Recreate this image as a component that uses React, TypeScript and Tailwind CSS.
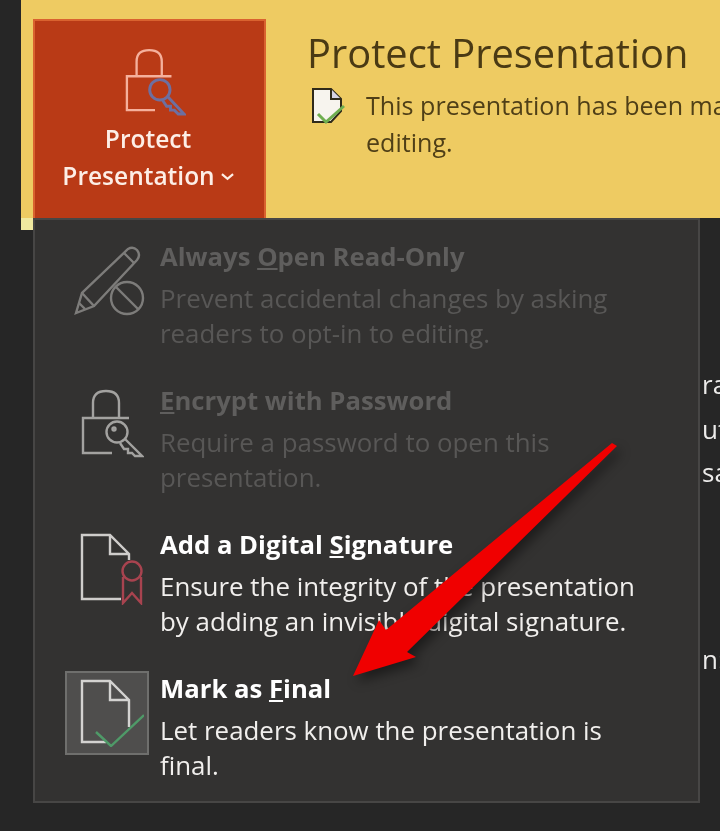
import React from 'react';

const font = { fontFamily: '"Open Sans", "Noto Sans", sans-serif' };

const PencilIcon = () => (
    <svg viewBox="0 0 72 72" className="w-[72px] h-[72px] ml-[6px]" fill="none" stroke="#7d7c7a" strokeWidth="2.4">
        <path d="M2 68 L8 48 L54 4 Q59 1 63 5 Q67 10 63 15 L20 61 Z" />
        <path d="M8 48 L20 61 M5 58 L11 64 M50 8 L60 18" />
        <circle cx="53" cy="53" r="16" />
        <path d="M42 42 L64 64" />
    </svg>
);

const LockIcon = ({ color, keyColor }: { color: string; keyColor: string }) => (
    <svg viewBox="0 0 64 72" className="w-[64px] h-[72px] ml-[9px]" fill="none" stroke={color} strokeWidth="2.4">
        <path d="M13 29 V14 Q13 2 26 2 Q39 2 39 14 V29" />
        <path d="M49 29 H3 V64 H32" />
        <g stroke={keyColor}>
            <circle cx="37" cy="43" r="10.5" />
            <circle cx="34" cy="40" r="1.5" />
            <path d="M45 50 L62 67 H55 L52 64 H48 L48 60 H44 L40 54" />
        </g>
    </svg>
);

const SignatureIcon = () => (
    <svg viewBox="0 0 64 72" className="w-[64px] h-[72px] ml-[9px]" fill="none" strokeWidth="2.4">
        <path d="M41 66 H2 V2 H30 L49 21 V27 M30 2 V21 H49" stroke="#cfcdcb" />
        <g stroke="#a8434f">
            <circle cx="52" cy="38" r="9.5" />
            <path d="M43 44 V70 L52 60 L61 70 V44" />
        </g>
    </svg>
);

const FinalIcon = () => (
    <svg viewBox="0 0 64 68" className="w-[64px] h-[68px] ml-[9px]" fill="none" strokeWidth="2.4">
        <path d="M26 63 H2 V2 H30 L49 21 V48 M30 2 V21 H49" stroke="#d4d3d1" />
        <path d="M16 53 L31 67 L64 36" stroke="#4f9a68" />
    </svg>
);

const MenuItem = ({ icon, title, lines, muted, active }: { icon: React.ReactNode; title: React.ReactNode; lines: string[]; muted?: boolean; active?: boolean }) => (
    <div className="flex h-[144px]">
        <div className={`w-[84px] h-[84px] shrink-0 flex items-center justify-center ${active ? 'bg-[#4f4e4d] border-2 border-[#6f6f6d]' : ''}`}>
            {icon}
        </div>
        <div className={`ml-[11px] ${muted ? 'text-[#585756]' : 'text-[#f1efed]'}`}>
            <div className={`text-[25.7px] leading-[35px] font-bold ${muted ? 'text-[#5f5e5d]' : 'text-white'}`}>{title}</div>
            <div className="mt-[7px] text-[25.9px] leading-[35px]">
                {lines.map((line) => (
                    <div key={line} className="whitespace-nowrap">{line}</div>
                ))}
            </div>
        </div>
    </div>
);

export default function App() {
    return (
        <div className="relative w-[720px] h-[831px] overflow-hidden bg-[#262626] blur-[0.5px]" style={font}>
            {/* Yellow info band */}
            <div className="ml-[21px] h-[218px] bg-[#eecb62] flex pl-[12px] pt-[19px]">
                <div className="w-[233px] h-[199px] shrink-0 bg-[#b93a16] border-t-2 border-x-2 border-[#d9622f] flex flex-col items-center text-[#fdeee6]">
                    <div className="mt-[27px] h-[70px] ml-[10px]">
                        <svg viewBox="0 0 64 72" className="w-[62px] h-[70px]" fill="none" stroke="#f5b09c" strokeWidth="2.4">
                            <path d="M13 29 V14 Q13 2 26 2 Q39 2 39 14 V29" />
                            <path d="M49 29 H3 V64 H32" />
                            <g stroke="#6d6fa0" strokeWidth="3">
                                <circle cx="37" cy="43" r="10.5" />
                                <path d="M45 50 L62 68 H56 L52 64 H48 L48 60 H44 L40 54" />
                            </g>
                        </svg>
                    </div>
                    <div className="text-[24.5px] leading-[37px] text-center font-semibold mt-[2px] -ml-[3px]">
                        <div>Protect</div>
                        <div className="flex items-center">
                            Presentation
                            <svg viewBox="0 0 14 8" className="w-[13px] h-[8px] ml-[6px] mt-[2px]" fill="none" stroke="#fdeee6" strokeWidth="2.4">
                                <path d="M1 1 L7 6 L13 1" />
                            </svg>
                        </div>
                    </div>
                </div>
                <div className="ml-[41px] text-[#4a3a14]">
                    <div className="text-[39.8px] leading-[44px] mt-[12px] whitespace-nowrap">Protect Presentation</div>
                    <div className="flex mt-[12px]">
                        <svg viewBox="0 0 36 38" className="w-[36px] h-[38px] ml-[4px] shrink-0" fill="none" strokeWidth="2">
                            <path d="M2 35 V2 H20 L30 12 V24 L20 35 Z" fill="#f7f4ee" stroke="#2f2a1a" />
                            <path d="M20 2 V12 H30" fill="#d7d3e2" stroke="#2f2a1a" />
                            <path d="M7 27 L15 35 L33 19" stroke="#6fae4f" strokeWidth="3" />
                        </svg>
                        <div className="ml-[19px] text-[25.1px] leading-[37px] text-[#4f3f17] whitespace-nowrap">
                            <div>This presentation has been marked as final to discourage</div>
                            <div>editing.</div>
                        </div>
                    </div>
                </div>
            </div>

            {/* Yellow edge running past the band, left of the menu */}
            <div className="absolute left-[21px] top-[218px] w-[12px] h-[12px] bg-[#f0e9a0]" />

            {/* Clipped page text behind the menu */}
            <div className="absolute left-[702px] top-[361px] text-[#ecebea] text-[26px] leading-[46px] whitespace-nowrap">
                <div className="h-[45px]">ra</div>
                <div className="h-[43px]">ut</div>
                <div className="h-[187px]">sa</div>
                <div>n:</div>
            </div>

            {/* Dropdown menu */}
            <div className="absolute left-[33px] top-[218px] w-[667px] h-[585px] bg-[#333231] border-2 border-[#474645] pt-[19px] pl-[30px]">
                <MenuItem
                    muted
                    icon={<PencilIcon />}
                    title={<>Always <span className="underline">O</span>pen Read-Only</>}
                    lines={['Prevent accidental changes by asking', 'readers to opt-in to editing.']}
                />
                <MenuItem
                    muted
                    icon={<LockIcon color="#a3a2a0" keyColor="#a3a2a0" />}
                    title={<><span className="underline">E</span>ncrypt with Password</>}
                    lines={['Require a password to open this', 'presentation.']}
                />
                <MenuItem
                    icon={<SignatureIcon />}
                    title={<>Add a Digital <span className="underline">S</span>ignature</>}
                    lines={['Ensure the integrity of the presentation', 'by adding an invisible digital signature.']}
                />
                <MenuItem
                    active
                    icon={<FinalIcon />}
                    title={<>Mark as <span className="underline">F</span>inal</>}
                    lines={['Let readers know the presentation is', 'final.']}
                />
            </div>

            {/* Red annotation arrow */}
            <svg viewBox="0 0 720 831" className="absolute inset-0 w-[720px] h-[831px] pointer-events-none drop-shadow-[4px_6px_6px_rgba(0,0,0,0.45)]">
                <path d="M612 443 L617 446 L407 652 L416 657 L353 676 L379 620 L386 630 Z" fill="#f00000" />
            </svg>
        </div>
    );
}
